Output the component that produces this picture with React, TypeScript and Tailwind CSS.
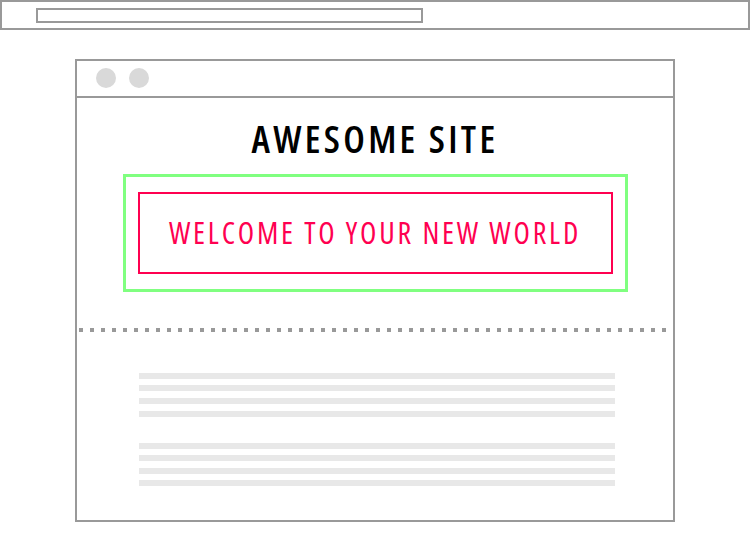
export default function App() {
  const group1 = ["mt-0", "mt-[6px]", "mt-[7px]", "mt-[7px]"];
  const group2 = ["mt-[26px]", "mt-[6px]", "mt-[7px]", "mt-[6px]"];
  return (
    <div className="w-[750px] h-[550px] bg-white overflow-hidden" style={{ fontFamily: '"Open Sans", "Liberation Sans", sans-serif' }}>
      <div className="w-[750px] h-[30px] border-2 border-[#999] pl-[34px] pt-[6px]">
        <div className="w-[387px] h-[15px] border-2 border-[#999]" />
      </div>
      <div className="mt-[29px] ml-[75px] w-[600px] h-[463px] border-2 border-[#999] flex flex-col">
        <div className="h-[37px] border-b-2 border-[#999] flex items-center gap-[13px] pl-[19px] pb-[1px]">
          <div className="w-5 h-5 rounded-full bg-[#d9d9d9]" />
          <div className="w-5 h-5 rounded-full bg-[#d9d9d9]" />
        </div>
        <div className="mt-[18px] text-center text-[38px] leading-[44px] font-[550] text-black font-stretch-condensed tracking-[3.3px]">
          AWESOME SITE
        </div>
        <div className="mt-[14px] mx-auto w-[505px] h-[118px] border-3 border-[#80ff80] px-[12px] py-[15px]">
          <div className="w-full h-full border-2 border-[#ff0050] flex items-center justify-center">
            <span className="text-[30px] leading-[36px] font-normal text-[#ff0050] font-stretch-condensed tracking-[2.8px]">
              WELCOME TO YOUR NEW WORLD
            </span>
          </div>
        </div>
        <div className="mt-[36px] ml-[2px] w-[588px] h-[4px] bg-[repeating-linear-gradient(90deg,#999_0_4px,transparent_4px_11px)]" />
        <div className="mt-[41px] ml-[62px] w-[476px] flex flex-col">
          {group1.map((m, i) => (
            <div key={"a" + i} className={`${m} h-[6px] bg-[#e8e8e8]`} />
          ))}
          {group2.map((m, i) => (
            <div key={"b" + i} className={`${m} h-[6px] bg-[#e8e8e8]`} />
          ))}
        </div>
      </div>
    </div>
  );
}
